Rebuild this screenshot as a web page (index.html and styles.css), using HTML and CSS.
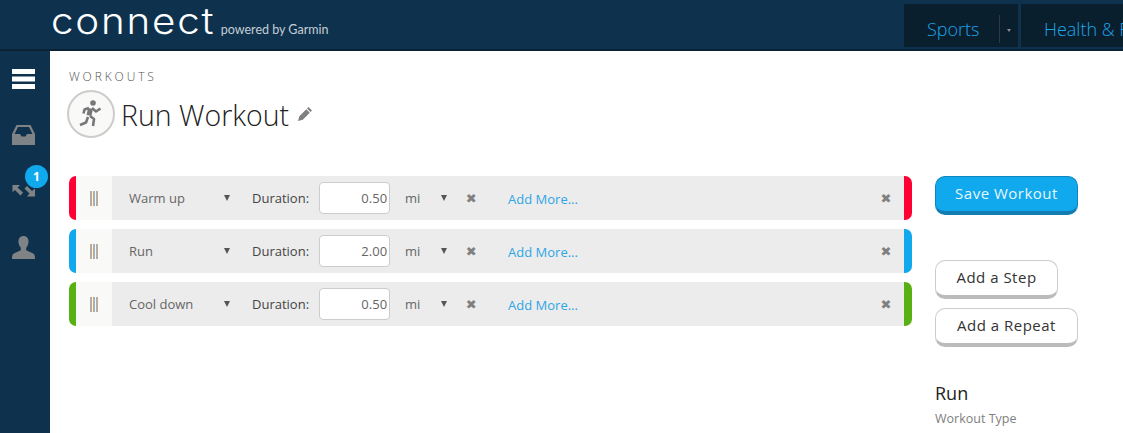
FILE: index.html
```html
<!DOCTYPE html>
<html>
<head>
	<meta charset="utf-8">
	<title>Run Workout</title>
	<link rel="stylesheet" href="styles.css">
</head>
<body>
<header class="topbar">
	<div class="brand">
		<span class="logo">connect</span>
		<span class="powered">powered by Garmin</span>
	</div>
	<nav class="tabs">
		<a class="tab tab-sports"><span>Sports</span><i class="tab-split"></i><i class="tab-caret"></i></a>
		<a class="tab tab-health"><span>Health &amp; Fitness</span></a>
	</nav>
</header>

<div class="shell">
	<aside class="sidebar">
		<div class="side-item side-menu">
			<svg width="24" height="20" viewBox="0 0 24 20"><path fill="#fff" d="M0 0h23v5H0zM0 7.500h23v5H0zM0 15h23v5H0z"/></svg>
		</div>
		<div class="side-item side-inbox">
			<svg width="24" height="20" viewBox="0 0 24 20"><path fill="#808386" fill-rule="evenodd" d="M4.500 0h14L23 9v11H0V9zM6 2 2.500 9H8l1.500 2.500h4L15 9h5.500L17 2z"/></svg>
		</div>
		<div class="side-item side-sync">
			<svg width="24" height="13" viewBox="0 0 24 13"><path fill="#808386" d="M.5 1h7.500L5.500 3.500 11 8.500 8.500 11.500 3 6 .5 8zM23 12.500h-8l2.500-3-5-5L15 2l5 5 3-2.500z"/></svg>
			<span class="badge">1</span>
		</div>
		<div class="side-item side-user">
			<svg width="24" height="23" viewBox="0 0 24 23"><path fill="#808386" d="M11.500 0c3 0 5 2.200 5 5.500 0 2.800-1 4.800-2.300 6.200v2.500l6.500 3c1.800.8 2.300 2.500 2.300 5.800H0c0-3.300.5-5 2.300-5.800l6.500-3v-2.500C7.500 10.300 6.500 8.300 6.500 5.500 6.500 2.200 8.500 0 11.500 0z"/></svg>
		</div>
	</aside>

	<main class="content">
		<div class="crumb">WORKOUTS</div>
		<div class="title-row">
			<div class="sport-badge">
				<svg width="24" height="28" viewBox="0 0 24 28"><circle cx="14" cy="3" r="2.800" fill="#77777a"/><g fill="none" stroke="#77777a" stroke-linejoin="round"><path stroke-width="5" d="M11.500 8.500 10 15.500"/><path stroke-width="2.600" d="M13 8l4 3.500 4.500-3M10 8 5.500 9.500 4.500 13.500M11 16l4 3-1 7M9 17 7 22.500 1 25"/></g></svg>
			</div>
			<h1>Run Workout</h1>
			<svg class="edit-icon" width="14" height="14" viewBox="0 0 14 14"><path fill="#808080" d="M10.500 0 14 3.500 12.500 5 9 1.500zM8.300 2.200l3.500 3.500-7 7L0 14l1.300-4.800z"/></svg>
		</div>

		<div class="editor">
			<div class="steps">
				<div class="step step-warm">
					<div class="step-edge"></div>
					<div class="step-handle"><i></i></div>
					<div class="step-body">
						<span class="step-type">Warm up</span><i class="caret"></i>
						<label class="dur-label">Duration:</label>
						<input class="dur-input" value="0.50">
						<span class="unit">mi</span><i class="caret"></i>
						<span class="clear">&#10006;</span>
						<a class="add-more">Add More...</a>
						<span class="clear clear-step">&#10006;</span>
					</div>
					<div class="step-edge step-edge-right"></div>
				</div>
				<div class="step step-run">
					<div class="step-edge"></div>
					<div class="step-handle"><i></i></div>
					<div class="step-body">
						<span class="step-type">Run</span><i class="caret"></i>
						<label class="dur-label">Duration:</label>
						<input class="dur-input" value="2.00">
						<span class="unit">mi</span><i class="caret"></i>
						<span class="clear">&#10006;</span>
						<a class="add-more">Add More...</a>
						<span class="clear clear-step">&#10006;</span>
					</div>
					<div class="step-edge step-edge-right"></div>
				</div>
				<div class="step step-cool">
					<div class="step-edge"></div>
					<div class="step-handle"><i></i></div>
					<div class="step-body">
						<span class="step-type">Cool down</span><i class="caret"></i>
						<label class="dur-label">Duration:</label>
						<input class="dur-input" value="0.50">
						<span class="unit">mi</span><i class="caret"></i>
						<span class="clear">&#10006;</span>
						<a class="add-more">Add More...</a>
						<span class="clear clear-step">&#10006;</span>
					</div>
					<div class="step-edge step-edge-right"></div>
				</div>
			</div>

			<div class="actions">
				<button class="btn btn-save">Save Workout</button>
				<button class="btn btn-step">Add a Step</button>
				<button class="btn btn-repeat">Add a Repeat</button>
				<div class="type-name">Run</div>
				<div class="type-label">Workout Type</div>
			</div>
		</div>
	</main>
</div>
</body>
</html>
```

FILE: styles.css
```css
html, body { height: 100%; }
body {
	margin: 0;
	overflow: hidden;
	background: #fff;
	font-family: "Open Sans", sans-serif;
	color: #333;
}

.topbar {
	display: flex;
	justify-content: space-between;
	height: 49px;
	background: #0e324d;
	border-bottom: 2px solid #0a2233;
	box-sizing: content-box;
}
.brand {
	display: flex;
	align-items: flex-end;
	padding: 0 0 10px 51px;
}
.logo {
	font-family: Inter, sans-serif;
	font-weight: 300;
	font-size: 36px;
	line-height: 36px;
	letter-spacing: 1.600px;
	color: #fff;
	transform: scaleX(1.12);
	transform-origin: left;
}
.powered {
	margin: 0 0 2px 23px;
	font-family: Lato, sans-serif;
	font-size: 12.500px;
	line-height: 14px;
	color: #c4ced6;
}
.tabs {
	display: flex;
	gap: 3px;
	width: 219px;
	overflow: hidden;
	padding-top: 4px;
	box-sizing: border-box;
	height: 47px;
}
.tab {
	display: flex;
	align-items: center;
	flex: none;
	height: 43px;
	padding-top: 7px;
	box-sizing: border-box;
	background: #0a1f2e;
	color: #1ea5e8;
	font-size: 18px;
	font-weight: 300;
	white-space: nowrap;
}
.tab-sports { width: 114px; padding-left: 23px; }
.tab-health { padding-left: 23px; width: 220px; }
.tab-split {
	width: 1px;
	height: 28px;
	margin: 0 0 0 19px;
	background: #2b3a46;
}
.tab-caret {
	margin: 2px 0 0 7px;
	border-left: 2px solid transparent;
	border-right: 2px solid transparent;
	border-top: 3px solid #8c8c8c;
}

.shell {
	display: flex;
	height: 382px;
}
.sidebar {
	flex: none;
	width: 50px;
	background: #0e324d;
	display: flex;
	flex-direction: column;
	align-items: center;
}
.side-item {
	position: relative;
	display: flex;
	justify-content: center;
	width: 100%;
	margin-left: -2px;
}
.side-item svg { display: block; }
.side-menu { margin-top: 18px; }
.side-inbox { margin-top: 36px; }
.side-sync { margin-top: 39px; }
.side-user { margin-top: 39px; }
.badge {
	position: absolute;
	top: -19px;
	left: 26px;
	width: 23px;
	height: 23px;
	border-radius: 50%;
	background: #11a9ed;
	color: #fff;
	font-size: 12px;
	font-weight: 700;
	line-height: 23px;
	text-align: center;
}

.content {
	flex: 1;
	padding: 19px 0 0 19px;
}
.crumb {
	font-size: 12px;
	font-weight: 300;
	line-height: 14px;
	letter-spacing: 2.900px;
	color: #555;
}
.title-row {
	display: flex;
	align-items: center;
	margin: 6px 0 0 -2px;
}
.sport-badge {
	display: flex;
	align-items: center;
	justify-content: center;
	width: 48px;
	height: 48px;
	border: 2px solid #ccc;
	border-radius: 50%;
	background: #f9f9f7;
	box-sizing: border-box;
}
h1 {
	margin: 2px 0 0 6px;
	font-size: 28.500px;
	font-weight: 300;
	line-height: 40px;
	color: #222;
}
.edit-icon { margin: 0 0 0 9px; }

.editor {
	display: flex;
	margin-top: 38px;
}
.steps {
	flex: none;
	width: 843px;
	display: flex;
	flex-direction: column;
	gap: 9px;
}
.step {
	display: flex;
	height: 44px;
}
.step-edge {
	flex: none;
	width: 7px;
	border-radius: 7px 0 0 7px;
}
.step-edge-right {
	width: 8px;
	border-radius: 0 7px 7px 0;
}
.step-warm .step-edge { background: #ff0035; }
.step-run .step-edge { background: #11a9ed; }
.step-cool .step-edge { background: #58b012; }
.step-handle {
	flex: none;
	display: flex;
	align-items: center;
	justify-content: center;
	width: 36px;
	background: #f9f9f7;
}
.step-handle i {
	width: 8px;
	height: 15px;
	background: repeating-linear-gradient(90deg, #dca66a 0 1px, #8fb4dc 1px 2px, transparent 2px 3px);
}
.step-body {
	flex: 1;
	display: flex;
	align-items: center;
	padding-left: 17px;
	background: #ececec;
	font-size: 13px;
}
.step-type {
	width: 95px;
	color: #666;
}
.caret {
	flex: none;
	border-left: 3.500px solid transparent;
	border-right: 3.500px solid transparent;
	border-top: 6px solid #555;
}
.dur-label {
	margin-left: 22px;
	color: #444;
}
.dur-input {
	width: 71px;
	height: 32px;
	margin-left: 10px;
	padding: 0 2px 0 0;
	border: 1px solid #ccc;
	border-radius: 4px;
	background: #fff;
	box-sizing: border-box;
	font: 13px "Open Sans", sans-serif;
	color: #666;
	text-align: right;
}
.unit {
	width: 36px;
	margin-left: 15px;
	color: #666;
}
.clear {
	width: 14px;
	margin-left: 17px;
	padding-top: 2px;
	font-family: "DejaVu Sans", sans-serif;
	font-size: 13px;
	line-height: 14px;
	text-align: center;
	color: #808080;
}
.add-more {
	margin-left: 30px;
	padding-top: 1px;
	color: #2ea5e5;
}
.clear-step {
	margin-left: 301px;
}

.actions {
	flex: none;
	display: flex;
	flex-direction: column;
	align-items: flex-start;
	width: 143px;
	margin-left: 23px;
}
.btn {
	padding: 0 0 2px;
	border: 1px solid #ccc;
	border-bottom-width: 4px;
	border-radius: 10px;
	background: #fff;
	box-sizing: border-box;
	font: 15px "Open Sans", sans-serif;
	letter-spacing: 0.5px;
	color: #333;
}
.btn-save {
	width: 143px;
	height: 39px;
	border-color: #0f86bf;
	border-bottom-color: #137cb0;
	background: #11a9ed;
	color: #e6f5fd;
}
.btn-step {
	width: 123px;
	height: 39px;
	margin-top: 45px;
	border-bottom-color: #bbb;
}
.btn-repeat {
	width: 143px;
	height: 39px;
	margin-top: 9px;
	border-bottom-color: #bbb;
}
.type-name {
	margin-top: 32px;
	font-size: 18px;
	line-height: 28px;
	color: #222;
}
.type-label {
	margin-top: 3px;
	font-size: 12.500px;
	line-height: 17px;
	color: #808080;
}
```
